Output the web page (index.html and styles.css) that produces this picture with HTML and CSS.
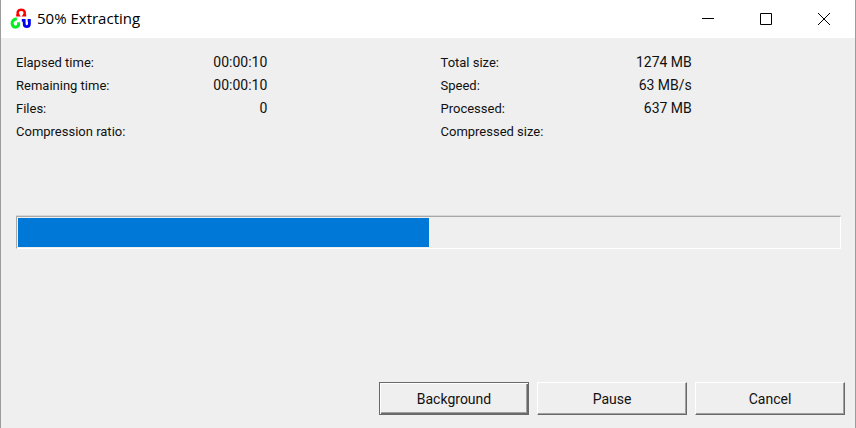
FILE: index.html
```html
<!DOCTYPE html>
<html lang="en">
<head>
  <meta charset="UTF-8">
  <meta name="viewport" content="width=device-width, initial-scale=1">
  <title>50% Extracting</title>
  <link rel="stylesheet" href="styles.css">
</head>
<body>
  <div class="window">
    <!-- Title bar -->
    <header class="titlebar">
      <svg class="app-icon" width="22" height="22" viewBox="0 0 22 22" fill="none" stroke-width="3">
        <path d="M6.2 7.2H8.4C6.6 4.4 8 1.8 11.2 1.8C14.4 1.8 15.8 4.4 14 7.2H16.2" stroke="#ff0000" stroke-width="2.5"/>
        <path d="M6.8 10.8C3.6 11.2 1.8 13.4 2.2 16C2.8 19.8 6.8 20 8.6 17.4V14.2" stroke="#00f020"/>
        <path d="M11.8 12.4H14.2V16C14.2 19.4 19.4 19.4 19.4 16V12.4H17.6" stroke="#0000f0" stroke-width="2.8"/>
      </svg>
      <h1>50% Extracting</h1>
      <div class="window-controls">
        <button type="button" aria-label="Minimize">
          <svg width="12" height="12" viewBox="0 0 12 12"><path d="M0 5.5H12"/></svg>
        </button>
        <button type="button" aria-label="Maximize">
          <svg width="12" height="12" viewBox="0 0 12 12"><path d="M.5 .5H11.5V11.5H.5Z"/></svg>
        </button>
        <button type="button" aria-label="Close">
          <svg width="12" height="12" viewBox="0 0 12 12"><path d="M0 0L12 12M12 0L0 12"/></svg>
        </button>
      </div>
    </header>

    <main class="content">
      <!-- Statistics -->
      <div class="stats">
        <table>
          <tr><th scope="row">Elapsed time:</th><td>00:00:10</td></tr>
          <tr><th scope="row">Remaining time:</th><td>00:00:10</td></tr>
          <tr><th scope="row">Files:</th><td>0</td></tr>
          <tr><th scope="row">Compression ratio:</th><td></td></tr>
        </table>
        <table>
          <tr><th scope="row">Total size:</th><td>1274 MB</td></tr>
          <tr><th scope="row">Speed:</th><td>63 MB/s</td></tr>
          <tr><th scope="row">Processed:</th><td>637 MB</td></tr>
          <tr><th scope="row">Compressed size:</th><td></td></tr>
        </table>
      </div>

      <progress class="progress" value="50" max="100" aria-label="Extracting"></progress>
    </main>

    <!-- Actions -->
    <footer class="actions">
      <button type="button" class="btn btn-default">Background</button>
      <button type="button" class="btn">Pause</button>
      <button type="button" class="btn">Cancel</button>
    </footer>
  </div>
</body>
</html>
```
FILE: styles.css
```css
* {
  box-sizing: border-box;
}

body {
  margin: 0;
  background: #efefef;
  color: #111;
  font-family: Roboto, "Liberation Sans", sans-serif;
  font-size: 14px;
}

.window {
  display: flex;
  flex-direction: column;
  min-height: 100vh;
  border: solid #9c9c9c;
  border-width: 0 1px;
}

/* Title bar */
.titlebar {
  display: flex;
  align-items: center;
  height: 38px;
  padding: 0 2px 0 9px;
  background: #fff;
}

.titlebar h1 {
  flex: 1;
  margin: 0 0 2px 5px;
  color: #000;
  font-family: "Open Sans", "Noto Sans", sans-serif;
  font-size: 15px;
  font-weight: 400;
}

.window-controls {
  display: flex;
  align-self: stretch;
}

.window-controls button {
  display: flex;
  align-items: center;
  justify-content: center;
  width: 58px;
  padding: 0;
  border: 0;
  background: none;
}

.window-controls svg {
  fill: none;
  stroke: #000;
}

/* Statistics */
.content {
  flex: 1;
  padding: 13px 14px 0 15px;
}

.stats {
  display: grid;
  grid-template-columns: 1fr 1fr;
  gap: 24px;
  align-items: start;
}

table {
  width: 63%;
  border-collapse: collapse;
}

th,
td {
  height: 23px;
  padding: 0;
  line-height: 23px;
  white-space: nowrap;
}

th {
  font-size: 13px;
  font-weight: 400;
  text-align: left;
}

td {
  padding-right: 1px;
  text-align: right;
}

/* Sunken progress bar */
.progress {
  display: block;
  width: 100%;
  height: 33px;
  margin-top: 73px;
  padding: 1px;
  border: 1px solid;
  border-color: #a8a8a8 #fff #fff #a8a8a8;
  background: #efefef;
  box-shadow: 0 -1px #d8d8d8;
  appearance: none;
}

.progress::-webkit-progress-bar {
  background: #efefef;
}

.progress::-webkit-progress-value {
  background: #0078d7;
}

/* Raised buttons */
.actions {
  display: flex;
  justify-content: flex-end;
  gap: 8px;
  padding: 0 10px 13px;
}

.btn {
  width: 150px;
  height: 33px;
  padding: 0;
  border: 1px solid;
  border-color: #fff #696969 #696969 #fff;
  background: #efefef;
  box-shadow: inset -1px -1px #a0a0a0;
  color: #111;
  font: inherit;
}

.btn-default {
  border-color: #696969;
  box-shadow: inset 1px 1px #fff, inset -1px -1px #696969, inset -2px -2px #a0a0a0;
}
```
